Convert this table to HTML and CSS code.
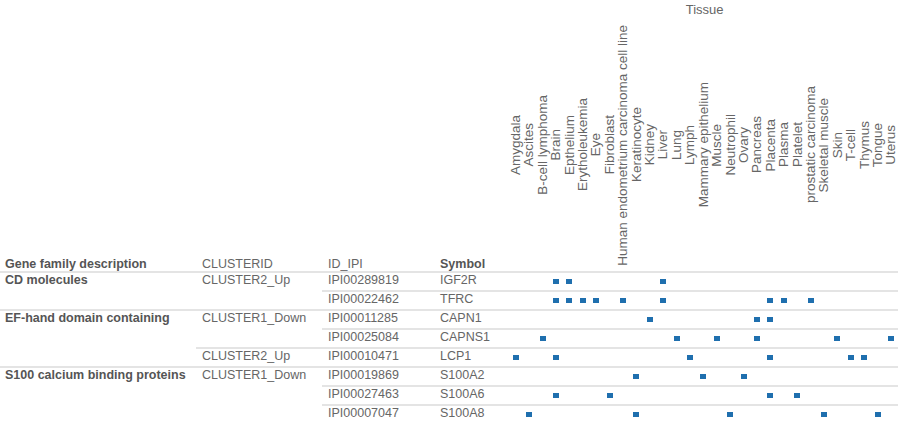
FILE: index.html
```html
<!DOCTYPE html>
<html>
<head>
<meta charset="utf-8">
<link rel="stylesheet" href="styles.css">
</head>
<body>
<div class="viz">
  <div class="hd hd-gene">Gene family description</div>
  <div class="hd hd-cl">CLUSTERID</div>
  <div class="hd hd-id">ID_IPI</div>
  <div class="hd hd-sym">Symbol</div>
  <div class="tissue-head">
    <div class="tissue-title">Tissue</div>
    <div class="tissue-labels">
      <span>Amygdala</span><span>Ascites</span><span>B-cell lymphoma</span><span>Brain</span><span>Epthelium</span><span>Erytholeukemia</span><span>Eye</span><span>Fibroblast</span><span>Human endometrium carcinoma cell line</span><span>Keratinocyte</span><span>Kidney</span><span>Liver</span><span>Lung</span><span>Lymph</span><span>Mammary epithelium</span><span>Muscle</span><span>Neutrophil</span><span>Ovary</span><span>Pancreas</span><span>Placenta</span><span>Plasma</span><span>Platelet</span><span>prostatic carcinoma</span><span>Skeletal muscle</span><span>Skin</span><span>T-cell</span><span>Thymus</span><span>Tongue</span><span>Uterus</span>
    </div>
  </div>

  <div class="cell gene span2">CD molecules</div>
  <div class="cell cl span2">CLUSTER2_Up</div>
  <div class="cell id">IPI00289819</div>
  <div class="cell sym">IGF2R</div>
  <div class="cell marks"><i style="--c:4"></i><i style="--c:5"></i><i style="--c:12"></i></div>

  <div class="cell id">IPI00022462</div>
  <div class="cell sym">TFRC</div>
  <div class="cell marks"><i style="--c:4"></i><i style="--c:5"></i><i style="--c:6"></i><i style="--c:7"></i><i style="--c:9"></i><i style="--c:12"></i><i style="--c:20"></i><i style="--c:21"></i><i style="--c:23"></i></div>

  <div class="cell gene span3">EF-hand domain containing</div>
  <div class="cell cl span2">CLUSTER1_Down</div>
  <div class="cell id">IPI00011285</div>
  <div class="cell sym">CAPN1</div>
  <div class="cell marks"><i style="--c:11"></i><i style="--c:19"></i><i style="--c:20"></i></div>

  <div class="cell id">IPI00025084</div>
  <div class="cell sym">CAPNS1</div>
  <div class="cell marks"><i style="--c:3"></i><i style="--c:13"></i><i style="--c:16"></i><i style="--c:19"></i><i style="--c:25"></i><i style="--c:29"></i></div>

  <div class="cell cl">CLUSTER2_Up</div>
  <div class="cell id">IPI00010471</div>
  <div class="cell sym">LCP1</div>
  <div class="cell marks"><i style="--c:1"></i><i style="--c:4"></i><i style="--c:14"></i><i style="--c:20"></i><i style="--c:26"></i><i style="--c:27"></i></div>

  <div class="cell gene span3">S100 calcium binding proteins</div>
  <div class="cell cl span3">CLUSTER1_Down</div>
  <div class="cell id">IPI00019869</div>
  <div class="cell sym">S100A2</div>
  <div class="cell marks"><i style="--c:10"></i><i style="--c:15"></i><i style="--c:18"></i></div>

  <div class="cell id">IPI00027463</div>
  <div class="cell sym">S100A6</div>
  <div class="cell marks"><i style="--c:4"></i><i style="--c:8"></i><i style="--c:20"></i><i style="--c:22"></i></div>

  <div class="cell id">IPI00007047</div>
  <div class="cell sym">S100A8</div>
  <div class="cell marks"><i style="--c:2"></i><i style="--c:10"></i><i style="--c:17"></i><i style="--c:24"></i><i style="--c:28"></i></div>
</div>
</body>
</html>
```

FILE: styles.css
```css
html, body {
  margin: 0;
  padding: 0;
  background: #ffffff;
}
body {
  width: 900px;
  height: 424px;
  overflow: hidden;
  font-family: "Liberation Sans", Arial, sans-serif;
  font-size: 12.5px;
  line-height: 14px;
  color: #666666;
}
.viz {
  display: grid;
  grid-template-columns: 196px 126px 112px 75px 389.2px;
  grid-template-rows: 271px repeat(8, 19.07px);
}
.hd {
  align-self: end;
  white-space: nowrap;
}
.hd-gene { padding-left: 5px; font-weight: bold; color: #555555; }
.hd-cl, .hd-id, .hd-sym { padding-left: 6px; }
.hd-sym { font-weight: bold; color: #555555; }

.tissue-head {
  display: flex;
  flex-direction: column;
}
.tissue-title {
  text-align: center;
  font-size: 13px;
  padding-top: 3px;
  padding-left: 2px;
  height: 19px;
  box-sizing: border-box;
}
.tissue-labels {
  flex: 1;
  display: grid;
  grid-template-columns: repeat(29, 13.42px);
  align-items: center;
  font-size: 13.5px;
}
.tissue-labels span {
  writing-mode: vertical-rl;
  transform: rotate(180deg);
  white-space: nowrap;
  line-height: 13.42px;
  width: 13.42px;
}

.cell {
  border-top: 2px solid #e4e4e4;
  white-space: nowrap;
  overflow: hidden;
}
.gene { padding-left: 5px; font-weight: bold; color: #555555; grid-column: 1; }
.cl { padding-left: 6px; grid-column: 2; }
.id { padding-left: 6px; grid-column: 3; }
.sym { padding-left: 6px; grid-column: 4; }
.span2 { grid-row: span 2; }
.span3 { grid-row: span 3; }
.marks {
  grid-column: 5;
  display: grid;
  grid-template-columns: repeat(29, 13.42px);
  align-items: center;
  padding-bottom: 1px;
}
.marks i {
  grid-column: var(--c);
  grid-row: 1;
  justify-self: center;
  width: 6px;
  height: 5px;
  background: #1f6fae;
}
```
